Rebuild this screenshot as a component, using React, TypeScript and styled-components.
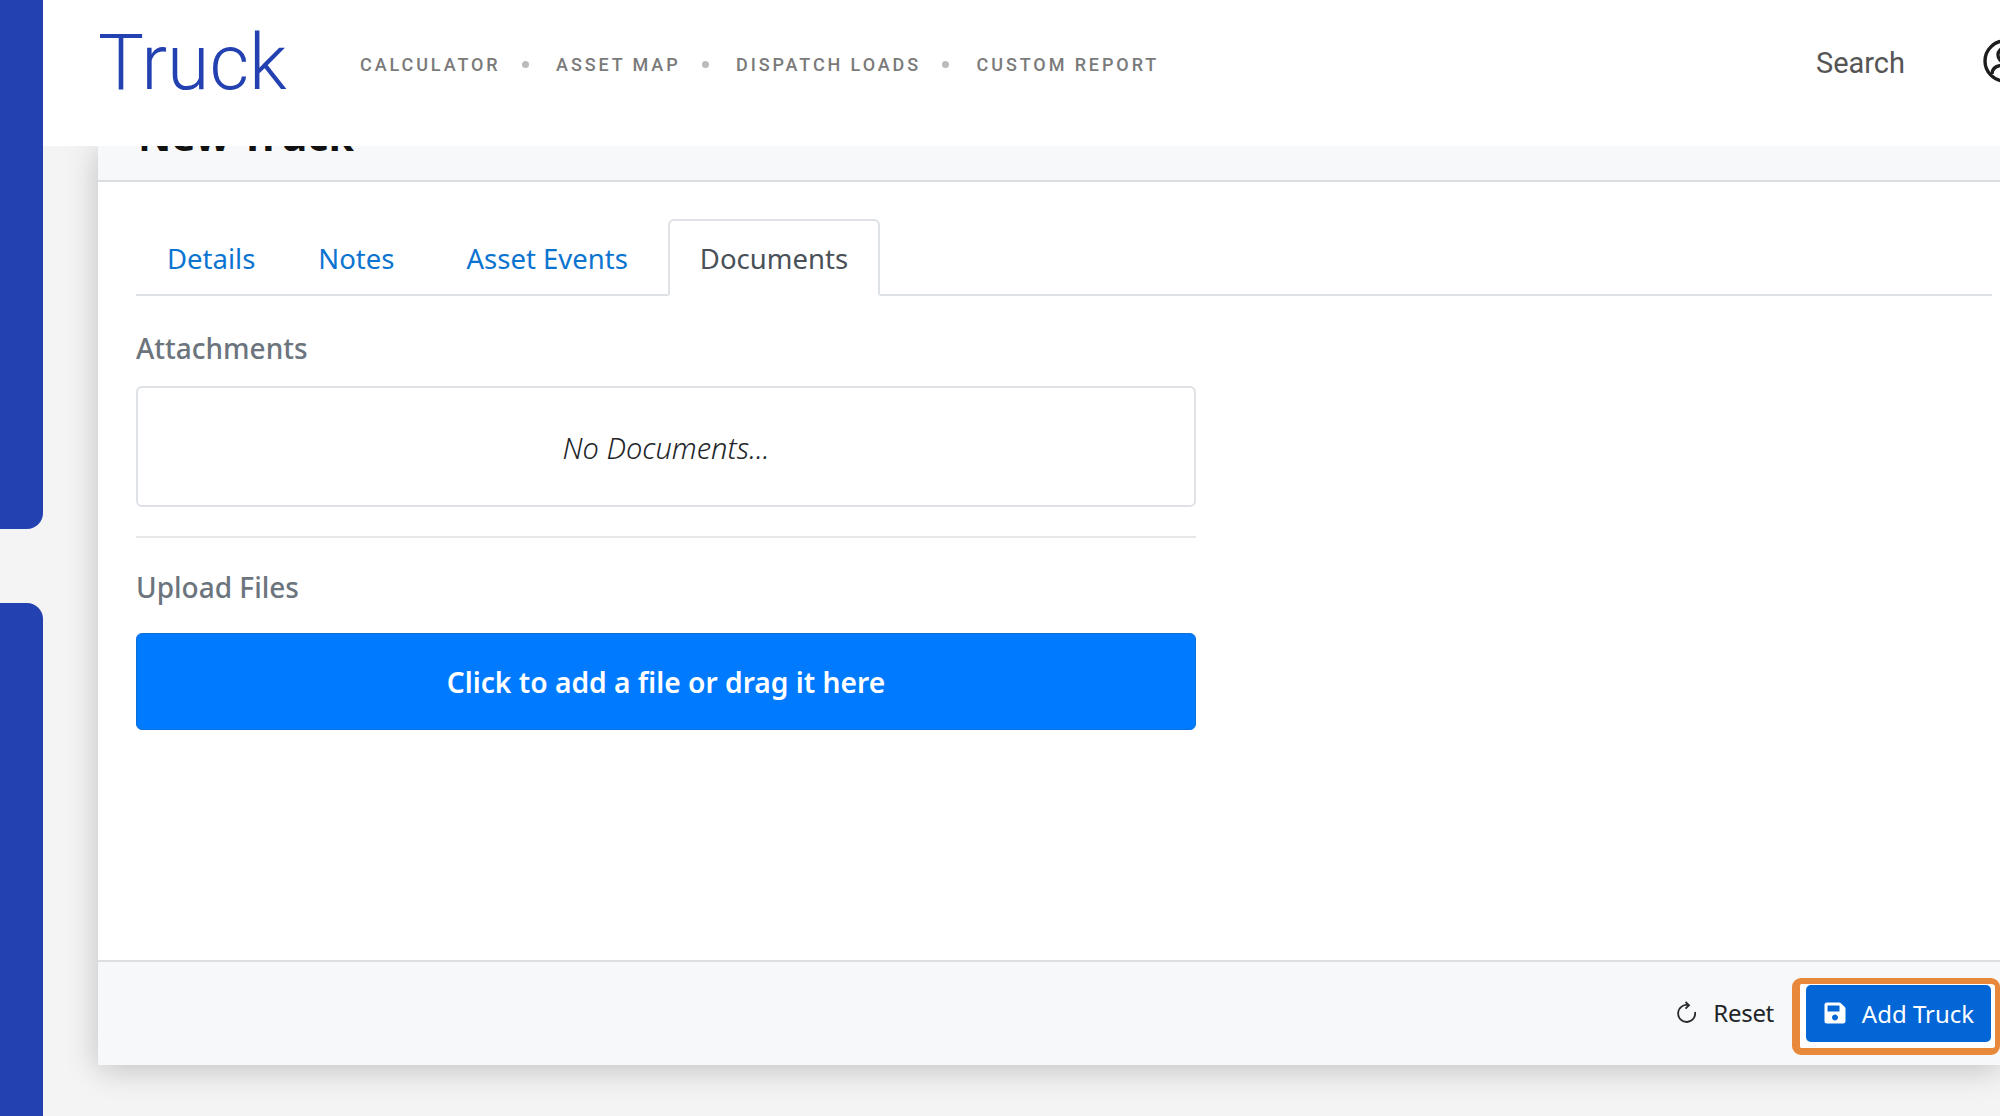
import React from "react";
import styled, { createGlobalStyle } from "styled-components";
import { FaSave } from "react-icons/fa";

const GlobalStyle = createGlobalStyle`
  html, body {
    margin: 0;
    padding: 0;
    height: 1116px;
    overflow: hidden;
    background: #f4f4f5;
    font-family: "Noto Sans", "Open Sans", sans-serif;
  }
`;

const Page = styled.div`
  display: flex;
  height: 1116px;
  width: 2000px;
  overflow: hidden;
`;
const Sidebar = styled.aside`
  width: 43px;
  flex: none;
  display: flex;
  flex-direction: column;
  gap: 74px;
`;
const SideBlock = styled.div<{ $top?: boolean }>`
  background: #2341b0;
  flex: ${(p) => (p.$top ? "0 0 529px" : "1")};
  border-radius: ${(p) => (p.$top ? "0 0 16px 0" : "0 16px 0 0")};
`;
const Main = styled.div`
  flex: 1;
  min-width: 0;
  display: flex;
  flex-direction: column;
`;
const Header = styled.header`
  height: 146px;
  flex: none;
  background: #fff;
  display: flex;
  align-items: center;
  padding-left: 55px;
  position: relative;
  z-index: 2;
  overflow: hidden;
`;
const Brand = styled.div`
  font-family: Roboto, sans-serif;
  font-weight: 300;
  font-size: 77px;
  line-height: 1;
  color: #2341b0;
  width: 262px;
  margin-top: -20px;
`;
const NavList = styled.nav`
  display: flex;
  align-items: center;
  margin-top: -17px;
`;
const NavLink = styled.a`
  font-family: Roboto, sans-serif;
  font-size: 18px;
  font-weight: 500;
  letter-spacing: 2.9px;
  color: #7a7a7a;
  text-transform: uppercase;
`;
const NavDot = styled.span`
  width: 7px;
  height: 7px;
  border-radius: 50%;
  background: #bbb;
  margin: 0 27.5px 0 21px;
`;
const Search = styled.div`
  font-family: Roboto, sans-serif;
  font-size: 29px;
  color: #555;
  margin-left: auto;
  margin-top: -20px;
`;
const AccountIcon = styled.svg`
  width: 44px;
  height: 44px;
  flex: none;
  margin: -24px -27px 0 78px;
  fill: none;
  stroke: #1d1d1d;
  stroke-width: 3.4;
`;
const Card = styled.section`
  margin-left: 55px;
  height: 919px;
  flex: none;
  background: #fff;
  display: flex;
  flex-direction: column;
  box-shadow: 0 4px 30px rgba(0, 0, 0, 0.22);
`;
const CardHeader = styled.div`
  height: 34px;
  flex: none;
  overflow: hidden;
  background: #f7f8fa;
  border-bottom: 2px solid #dcdee0;
`;
const Title = styled.h1`
  margin: -31px 0 0 40px;
  font-family: "Noto Sans", sans-serif;
  font-size: 41px;
  line-height: 40px;
  font-weight: 700;
  color: #111;
`;
const CardBody = styled.div`
  flex: 1;
  padding: 37px 8px 0 38px;
`;
const Tabs = styled.div`
  display: flex;
  height: 75px;
  padding-left: 1px;
  border-bottom: 2px solid #dee2e6;
`;
const Tab = styled.a<{ $active?: boolean; $gap?: number }>`
  height: 77px;
  box-sizing: border-box;
  padding: 2px 30px 0;
  margin-right: ${(p) => p.$gap ?? 0}px;
  display: flex;
  align-items: center;
  font-size: 27.5px;
  color: ${(p) => (p.$active ? "#495057" : "#0b74d1")};
  background: ${(p) => (p.$active ? "#fff" : "transparent")};
  border: ${(p) => (p.$active ? "2px solid #dee2e6" : "none")};
  border-bottom: ${(p) => (p.$active ? "2px solid #fff" : "none")};
  border-radius: 6px 6px 0 0;
`;
const Column = styled.div`
  width: 1060px;
`;
const Label = styled.div<{ $first?: boolean }>`
  font-size: 28px;
  font-weight: 500;
  color: #6c757d;
  line-height: 36px;
  margin-top: ${(p) => (p.$first ? "34px" : "0")};
`;
const DocList = styled.div`
  height: 121px;
  box-sizing: border-box;
  border: 2px solid #dee2e6;
  border-radius: 6px;
  padding-top: 2px;
  display: flex;
  align-items: center;
  justify-content: center;
  font-style: italic;
  font-weight: 300;
  font-size: 29px;
  color: #212529;
  margin-top: 20px;
`;
const Divider = styled.hr`
  border: 0;
  border-top: 2px solid #e5e7e9;
  margin: 29px 0 31px;
`;
const Upload = styled.div`
  height: 97px;
  box-sizing: border-box;
  margin-top: 28px;
  background: #007bff;
  border: 1px solid #0a6fd8;
  border-radius: 6px;
  display: flex;
  align-items: center;
  justify-content: center;
  color: #fff;
  font-size: 28.2px;
  font-weight: 600;
`;
const Footer = styled.footer`
  height: 105px;
  flex: none;
  box-sizing: border-box;
  background: #f7f8fa;
  border-top: 2px solid #dcdee0;
  display: flex;
  align-items: center;
  justify-content: flex-end;
`;
const ResetButton = styled.button`
  border: 0;
  background: none;
  padding: 0;
  display: flex;
  align-items: center;
  gap: 16px;
  font: inherit;
  font-size: 24px;
  letter-spacing: -0.3px;
  color: #212529;
  margin: 0 18px 2px 0;
`;
const ResetIcon = styled.svg`
  width: 20px;
  height: 23px;
  fill: none;
  stroke: #2a2a2a;
  stroke-width: 1.8;
  margin-top: -1px;
`;
const Highlight = styled.div`
  width: 208px;
  height: 77px;
  flex: none;
  box-sizing: border-box;
  border: solid #e8883a;
  border-width: 6px 5px 7px 8px;
  border-radius: 9px;
  padding: 1px 4px 6px 6px;
  background: #fff;
  margin-top: 5px;
`;
const SaveButton = styled.button`
  width: 100%;
  height: 100%;
  border: 0;
  border-radius: 5px;
  background: #0366d6;
  color: #fff;
  display: flex;
  align-items: center;
  justify-content: center;
  gap: 15px;
  padding: 0;
  font: inherit;
  font-size: 24px;
`;

export default function App() {
  return (
    <>
      <GlobalStyle />
      <Page>
        <Sidebar>
          <SideBlock $top />
          <SideBlock />
        </Sidebar>
        <Main>
          <Header>
            <Brand>Truck</Brand>
            <NavList>
              <NavLink>Calculator</NavLink>
              <NavDot />
              <NavLink>Asset Map</NavLink>
              <NavDot />
              <NavLink>Dispatch Loads</NavLink>
              <NavDot />
              <NavLink>Custom Report</NavLink>
            </NavList>
            <Search>Search</Search>
            <AccountIcon viewBox="0 0 44 44">
              <circle cx="22" cy="22" r="20" />
              <circle cx="22" cy="16" r="7" />
              <path d="M9 35c0-7 6-9 13-9s13 2 13 9" />
            </AccountIcon>
          </Header>
          <Card>
            <CardHeader>
              <Title>New Truck</Title>
            </CardHeader>
            <CardBody>
              <Tabs>
                <Tab $gap={3}>Details</Tab>
                <Tab $gap={12}>Notes</Tab>
                <Tab $gap={10}>Asset Events</Tab>
                <Tab $active>Documents</Tab>
              </Tabs>
              <Column>
                <Label $first>Attachments</Label>
                <DocList>No Documents...</DocList>
                <Divider />
                <Label>Upload Files</Label>
                <Upload>Click to add a file or drag it here</Upload>
              </Column>
            </CardBody>
            <Footer>
              <ResetButton>
                <ResetIcon viewBox="0 0 20 23">
                  <path d="M11.5 4.2A8.5 8.5 0 1 0 18 11" />
                  <path d="M8.5 1l3.5 3.2-3.5 3.4" />
                </ResetIcon>
                Reset
              </ResetButton>
              <Highlight>
                <SaveButton>
                  <FaSave size={24} />
                  Add Truck
                </SaveButton>
              </Highlight>
            </Footer>
          </Card>
        </Main>
      </Page>
    </>
  );
}
